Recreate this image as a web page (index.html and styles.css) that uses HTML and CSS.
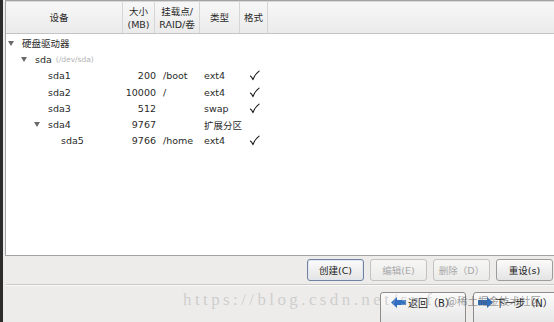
FILE: index.html
```html
<!DOCTYPE html>
<html lang="zh-CN">

<head>
    <meta charset="UTF-8">
    <meta name="viewport" content="width=device-width, initial-scale=1.0">
    <title>分区</title>
    <link rel="stylesheet" href="styles.css">
</head>

<body>
    <div class="frame">
        <div class="edge"></div>
        <div class="main">
            <div class="tree">
                <div class="head">
                    <div class="hcell first">设备</div>
                    <div class="hcell">大小<br>(MB)</div>
                    <div class="hcell">挂载点/<br>RAID/卷</div>
                    <div class="hcell">类型</div>
                    <div class="hcell">格式</div>
                    <div class="hcell last"></div>
                </div>
                <div class="rows">
                    <div class="row">
                        <div class="name lv0"><span class="exp"><i class="tri"></i></span>硬盘驱动器</div>
                    </div>
                    <div class="row">
                        <div class="name lv1"><span class="exp"><i class="tri"></i></span>sda <small>(/dev/sda)</small></div>
                    </div>
                    <div class="row">
                        <div class="name lv2"><span class="exp"></span>sda1</div>
                        <div class="size">200</div>
                        <div class="mnt">/boot</div>
                        <div class="type">ext4</div>
                        <div class="fmt"><svg class="chk" viewBox="0 0 12 12"><path d="M1.5 6.5 Q3.2 7.4 4.3 10.5 Q6.5 4.5 11 1.2"/></svg></div>
                    </div>
                    <div class="row">
                        <div class="name lv2"><span class="exp"></span>sda2</div>
                        <div class="size">10000</div>
                        <div class="mnt">/</div>
                        <div class="type">ext4</div>
                        <div class="fmt"><svg class="chk" viewBox="0 0 12 12"><path d="M1.5 6.5 Q3.2 7.4 4.3 10.5 Q6.5 4.5 11 1.2"/></svg></div>
                    </div>
                    <div class="row">
                        <div class="name lv2"><span class="exp"></span>sda3</div>
                        <div class="size">512</div>
                        <div class="mnt"></div>
                        <div class="type">swap</div>
                        <div class="fmt"><svg class="chk" viewBox="0 0 12 12"><path d="M1.5 6.5 Q3.2 7.4 4.3 10.5 Q6.5 4.5 11 1.2"/></svg></div>
                    </div>
                    <div class="row">
                        <div class="name lv2"><span class="exp"><i class="tri"></i></span>sda4</div>
                        <div class="size">9767</div>
                        <div class="mnt"></div>
                        <div class="type">扩展分区</div>
                        <div class="fmt"></div>
                    </div>
                    <div class="row">
                        <div class="name lv3"><span class="exp"></span>sda5</div>
                        <div class="size">9766</div>
                        <div class="mnt">/home</div>
                        <div class="type">ext4</div>
                        <div class="fmt"><svg class="chk" viewBox="0 0 12 12"><path d="M1.5 6.5 Q3.2 7.4 4.3 10.5 Q6.5 4.5 11 1.2"/></svg></div>
                    </div>
                </div>
            </div>

            <div class="actions">
                <button class="btn focus">创建(C)</button>
                <button class="btn off">编辑(E)</button>
                <button class="btn off">删除（D）</button>
                <button class="btn">重设(s)</button>
            </div>
            <div class="sep"></div>
            <div class="nav">
                <button class="btn big">
                    <svg width="15" height="11" viewBox="0 0 15 11"><polygon points="0,5.5 6,0 6,3 15,3 15,8 6,8 6,11" fill="#2f6fc4"/></svg>
                    返回（B）
                </button>
                <button class="btn big next">
                    <svg width="15" height="11" viewBox="0 0 15 11"><polygon points="15,5.5 9,0 9,3 0,3 0,8 9,8 9,11" fill="#2f6fc4"/></svg>
                    下一步（N）
                </button>
            </div>
        </div>
    </div>

    <!-- 水印 -->
    <div class="mark-url">https://blog.csdn.net/swf_c</div>
    <div class="mark-jj">@稀土掘金技术社区</div>
</body>

</html>
```

FILE: styles.css
```css
* {
    margin: 0;
    padding: 0;
    box-sizing: border-box;
}

body {
    width: 554px;
    height: 322px;
    overflow: hidden;
    background: #edecea;
    font-family: "DejaVu Sans", "Noto Sans CJK SC", sans-serif;
    font-size: 9.5px;
    color: #2a2a2a;
    position: relative;
}

.frame {
    display: flex;
    height: 100%;
}

.edge {
    width: 3px;
    background: #2c2c2c;
    flex: none;
}

.main {
    flex: 1;
    padding-left: 2px;
    display: flex;
    flex-direction: column;
    min-width: 0;
}

.main > * {
    flex: none;
}

/* 树形列表 */
.tree {
    height: 256px;
    background: #fff;
    border: 1px solid #a3a3a3;
    border-right: none;
    margin-right: -2px;
}

.head {
    display: grid;
    grid-template-columns: 117px 32px 45px 40px 28px 1fr;
    height: 33px;
    background: linear-gradient(#f7f7f7, #ebebeb);
    border-top: 1px solid #d8d8d8;
    border-bottom: 1px solid #c4c4c4;
}

.hcell {
    display: flex;
    align-items: center;
    justify-content: center;
    text-align: center;
    line-height: 13px;
    border-right: 1px solid #d6d6d6;
}

.hcell.first {
    padding-right: 10px;
}

.hcell.last {
    border-right: none;
}

.rows {
    padding-top: 1px;
}

.row {
    display: grid;
    grid-template-columns: 117px 33px 44px 40px 28px;
    height: 16.3px;
    align-items: center;
    white-space: nowrap;
}

.name {
    display: flex;
    align-items: center;
}

.name small {
    font-size: 7.5px;
    color: #b4b4b4;
    margin-left: 4px;
}

.lv0 {
    padding-left: 2px;
}

.lv1 {
    padding-left: 15px;
}

.lv2 {
    padding-left: 28px;
}

.lv3 {
    padding-left: 41px;
}

.exp {
    width: 14px;
    height: 10px;
    flex: none;
    display: flex;
    align-items: center;
}

.tri {
    width: 0;
    height: 0;
    border-left: 3.5px solid transparent;
    border-right: 3.5px solid transparent;
    border-top: 5px solid #6a6a6a;
}

.size {
    text-align: right;
}

.mnt {
    padding-left: 7px;
}

.type {
    padding-left: 4px;
}

.fmt {
    display: flex;
    justify-content: center;
}

.chk {
    width: 11px;
    height: 11px;
    fill: none;
    stroke: #1a1a1a;
    stroke-width: 1.2;
    stroke-linecap: round;
    stroke-linejoin: round;
}

/* 按钮 */
.actions {
    display: flex;
    justify-content: flex-end;
    gap: 6px;
    padding-top: 3px;
    padding-right: 1px;
}

.btn {
    width: 57px;
    height: 22px;
    font-family: "DejaVu Sans", "Noto Sans CJK SC", sans-serif;
    font-size: 9.5px;
    color: #222;
    background: linear-gradient(#fbfbfb, #e4e4e4);
    border: 1px solid #9c9c9c;
    border-radius: 3px;
}

.btn.focus {
    border-color: #6f83a0;
    box-shadow: inset 0 0 0 1px #dfe6f0;
}

.btn.off {
    color: #a9a9a9;
    border-color: #c2c2c2;
    background: linear-gradient(#f6f6f5, #ebebea);
}

.sep {
    margin-top: 3px;
    margin-left: 1px;
    height: 2px;
    border-top: 1px solid #c9c9c9;
    border-bottom: 1px solid #fafafa;
}

.nav {
    display: flex;
    justify-content: flex-end;
    gap: 7px;
    padding-top: 6px;
    margin-right: -4px;
}

.btn.big {
    width: 86px;
    height: 36px;
    display: flex;
    align-items: flex-start;
    padding-top: 2px;
    gap: 2px;
    justify-content: center;
    font-size: 10px;
    border-color: #8c8c8c;
}

.btn.big svg {
    margin-top: 2px;
}

.btn.next {
    width: 85px;
}

/* 水印 */
.mark-url {
    position: absolute;
    left: 183px;
    top: 290px;
    font-family: "Liberation Serif", serif;
    font-size: 17px;
    letter-spacing: 3.4px;
    color: rgba(180, 180, 180, 0.55);
    white-space: nowrap;
}

.mark-jj {
    position: absolute;
    left: 447px;
    top: 293px;
    font-family: "Noto Sans CJK SC", sans-serif;
    font-size: 10.5px;
    color: rgba(90, 90, 90, 0.6);
    white-space: nowrap;
}
```
